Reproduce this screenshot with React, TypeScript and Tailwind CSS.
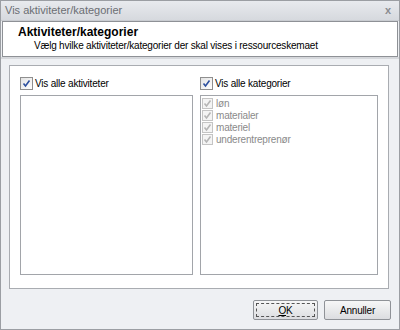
import React from "react";

function Check({ disabled }: { disabled?: boolean }) {
  return (
    <span
      className={
        "inline-flex items-center justify-center border shrink-0 " +
        (disabled
          ? "w-[11px] h-[11px] border-[#c4c4c4] bg-[#f4f4f4]"
          : "w-[13px] h-[13px] border-[#8f8f8f] bg-gradient-to-br from-[#e3e3e3] to-white")
      }
    >
      <svg width="9" height="9" viewBox="0 0 9 9">
        <path
          d="M1.5 4.5 L3.5 7 L7.5 1.5"
          fill="none"
          stroke={disabled ? "#b5b5b5" : "#2c4f9e"}
          strokeWidth="1.6"
        />
      </svg>
    </span>
  );
}

const kategorier = ["løn", "materialer", "materiel", "underentreprenør"];

export default function App() {
  return (
    <div className="w-[400px] h-[330px] flex flex-col border border-[#9b9ea3] bg-[#eef0f3] font-['Liberation_Sans',sans-serif] text-[10px] tracking-[-0.2px] text-black overflow-hidden">
      {/* title bar */}
      <div className="h-[20px] flex items-center justify-between px-[4px] bg-gradient-to-b from-[#e8eaee] to-[#d6d9de] border-b border-[#c9ccd1]">
        <span className="text-[#6b6e73] text-[11px] tracking-[0px]">Vis aktiviteter/kategorier</span>
        <span className="text-[#8a8c90] text-[11px] font-bold mr-[4px]">x</span>
      </div>

      {/* header */}
      <div className="mx-[1px] h-[36px] bg-white border border-[#8e9196] flex flex-col justify-center pl-[15px]">
        <div className="font-bold text-[12px] tracking-[0px] leading-[13px]">Aktiviteter/kategorier</div>
        <div className="pl-[16px] leading-[13px]">Vælg hvilke aktiviteter/kategorier der skal vises i ressourceskemaet</div>
      </div>
      <div className="h-[2px] bg-[#d6d8dc]" />

      {/* body */}
      <div className="flex-1 flex flex-col px-[8px] pt-[6px]">
        <div className="h-[224px] bg-white border border-[#a9acb1] mr-[2px] flex gap-[7px] px-[10px] pt-[10px] pb-[13px]">
          <div className="w-[173px] flex flex-col">
            <label className="flex items-center gap-[2px] h-[15px]">
              <Check />
              <span>Vis alle aktiviteter</span>
            </label>
            <div className="mt-[4px] flex-1 border border-[#a2a5aa] bg-white" />
          </div>
          <div className="flex-1 flex flex-col">
            <label className="flex items-center gap-[2px] h-[15px]">
              <Check />
              <span>Vis alle kategorier</span>
            </label>
            <div className="mt-[4px] flex-1 border border-[#a2a5aa] bg-white pt-[1px] pl-[1px]">
              {kategorier.map((k) => (
                <div key={k} className="flex items-center gap-[3px] h-[12px] text-[#8a8a8a]">
                  <Check disabled />
                  <span>{k}</span>
                </div>
              ))}
            </div>
          </div>
        </div>

        <div className="flex justify-end gap-[6px] mt-[11px]">
          <button className="w-[65px] h-[20px] border border-[#8f9297] rounded-[2px] bg-gradient-to-b from-[#f7f7f7] to-[#dcdde0] flex items-center justify-center p-[2px]">
            <span className="w-full h-full border border-dashed border-[#555] flex items-center justify-center">
              <span><u>O</u>K</span>
            </span>
          </button>
          <button className="w-[67px] h-[20px] border border-[#8f9297] rounded-[2px] bg-gradient-to-b from-[#f7f7f7] to-[#dcdde0] flex items-center justify-center">
            Annuller
          </button>
        </div>
      </div>
    </div>
  );
}
